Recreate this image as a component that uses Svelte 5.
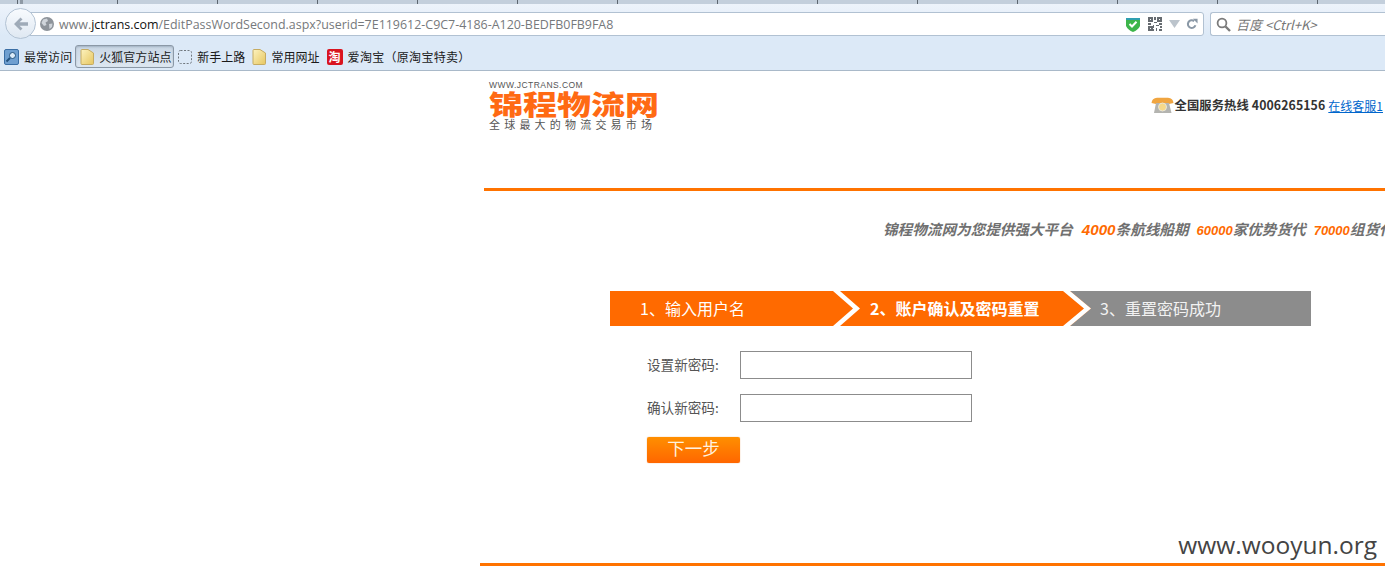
<script>
  const bookmarks = [
    { icon: 'search', label: '最常访问' },
    { icon: 'folder', label: '火狐官方站点', active: true },
    { icon: 'dashed', label: '新手上路' },
    { icon: 'folder', label: '常用网址' },
    { icon: 'tao', label: '爱淘宝（原淘宝特卖）' }
  ];
  const qrCells = [
    [0,0,3,3],[6,0,3,3],[0,6,3,3],[1,1,1,1],[7,1,1,1],[1,7,1,1],
    [4,0,1,2],[4,3,2,1],[0,4,2,1],[3,5,1,2],[5,5,2,1],[7,4,2,1],[8,6,1,1],[5,7,1,2],[7,8,2,1],[3,8,1,1]
  ];
</script>

<div class="browser">
  <div class="tabstrip"></div>
  <div class="toolbar">
    <div class="nav">
      <div class="urlbar">
        <svg class="globe" viewBox="0 0 14 14" width="14" height="14">
          <circle cx="7" cy="7" r="7" fill="#8d939a" />
          <path d="M3 2.5 L7 1.5 L8 4 L5.5 5.5 L6.5 8 L4 9 L1.5 6 Z M9 7 L12.5 6.5 L12 10 L9.5 12 Z" fill="#cfd4da" />
        </svg>
        <span class="url"><span class="dim">www.</span><span class="host">jctrans.com</span><span class="dim">/EditPassWordSecond.aspx?userid=7E119612-C9C7-4186-A120-BEDFB0FB9FA8</span></span>
        <svg class="shield" viewBox="0 0 14 15" width="14" height="15">
          <path d="M0 1 H14 V9 Q12 13 7 15 Q2 13 0 9 Z" fill="#3db54a" />
          <path d="M0 1 H14 V3 H0 Z" fill="#2f9fb0" />
          <path d="M3.5 7 L6 9.5 L10.5 4.8" fill="none" stroke="#fff" stroke-width="2" />
        </svg>
        <svg class="qr" viewBox="0 0 9 9" width="14" height="14" shape-rendering="crispEdges">
          {#each qrCells as c, i}
            <rect x={c[0]} y={c[1]} width={c[2]} height={c[3]} fill={i > 2 && i < 6 ? '#fff' : '#666b70'} />
          {/each}
        </svg>
        <svg class="tri" viewBox="0 0 11 8" width="11" height="8"><path d="M0 0 H11 L5.5 8 Z" fill="#bcc4cc" /></svg>
        <svg class="reload" viewBox="0 0 14 14" width="12" height="12">
          <path d="M11 8.5 A4.5 4.5 0 1 1 9.5 3.6" fill="none" stroke="#8a98a6" stroke-width="2.4" />
          <path d="M8 1 H13.5 V6.5 Z" fill="#8a98a6" />
        </svg>
      </div>
      <div class="searchbox">
        <svg viewBox="0 0 15 15" width="15" height="15">
          <circle cx="6" cy="6" r="4.4" fill="none" stroke="#7b7b7b" stroke-width="1.8" />
          <path d="M9.5 9.5 L14 14" stroke="#7b7b7b" stroke-width="2.4" />
        </svg>
        <span>百度 &lt;Ctrl+K&gt;</span>
      </div>
      <div class="back">
        <svg viewBox="0 0 16 14" width="16" height="14">
          <path d="M7.5 0.5 L1 7 L7.5 13.5 L9.5 11.5 L6.5 8.7 H15 V5.3 H6.5 L9.5 2.5 Z" fill="#9fabb8" />
        </svg>
      </div>
    </div>
    <div class="bookmarks">
      {#each bookmarks as b}
        <div class="bm" class:active={b.active}>
          {#if b.icon === 'search'}
            <svg viewBox="0 0 15 16" width="15" height="16">
              <rect x="0.5" y="0.5" width="14" height="15" rx="1.5" fill="#6f9fd0" stroke="#3a6ea5" />
              <circle cx="8.5" cy="6.5" r="3" fill="#dcebf8" stroke="#23527f" />
              <path d="M6 9 L2.5 12.5" stroke="#23527f" stroke-width="2" />
            </svg>
          {:else if b.icon === 'folder'}
            <svg viewBox="0 0 14 16" width="14" height="16">
              <defs>
                <linearGradient id="fold" x1="0" y1="0" x2="1" y2="1">
                  <stop offset="0" stop-color="#fdf3c0" />
                  <stop offset="1" stop-color="#e6c65f" />
                </linearGradient>
              </defs>
              <path d="M1 1.5 Q1 0.5 2 0.5 H8 L13.5 4 V14.5 Q13.5 15.5 12.5 15.5 H2 Q1 15.5 1 14.5 Z" fill="url(#fold)" stroke="#c5ab62" />
            </svg>
          {:else if b.icon === 'dashed'}
            <svg viewBox="0 0 14 14" width="14" height="14">
              <rect x="0.5" y="0.5" width="13" height="13" rx="2" fill="none" stroke="#71787f" stroke-dasharray="2 1.5" />
            </svg>
          {:else}
            <span class="tao">淘</span>
          {/if}
          <span class="bm-label">{b.label}</span>
        </div>
      {/each}
    </div>
  </div>

  <main class="page">
    <header class="head">
      <div class="logo">
        <div class="logo-url">WWW.JCTRANS.COM</div>
        <div class="logo-name">锦程物流网</div>
        <div class="logo-sub">全球最大的物流交易市场</div>
      </div>
      <div class="hotline">
        <svg viewBox="0 0 23 16" width="23" height="16">
          <path d="M0.5 6 Q1 1 6 0.8 H17 Q22 1 22.5 6 L18 7 L5 7 L0.5 6 Z" fill="#f0a540" />
          <path d="M3 16 L5 6 H18 L20.5 16 Z" fill="#b4b4b0" />
          <circle cx="11.5" cy="10" r="4" fill="#f6d98a" stroke="#e9e6d8" />
        </svg>
        <b>全国服务热线 4006265156</b>
        <a href="#kf">在线客服1</a>
      </div>
    </header>
    <div class="rule"></div>
    <div class="slogan">
      锦程物流网为您提供强大平台<em class="big">4000</em>条航线船期<em>60000</em>家优势货代<em>70000</em>组货代
    </div>

    <section class="reset">
      <div class="steps">
        <svg class="chev" viewBox="0 0 701 35" width="701" height="35">
          <polygon points="460,0 701,0 701,35 460,35 481,17.5" fill="#8c8c8c" />
          <polygon points="223,0 230,0 250,17.5 230,35 223,35 243,17.5" fill="#fff" />
          <polygon points="453,0 460,0 481,17.5 460,35 453,35 474,17.5" fill="#fff" />
        </svg>
        <div class="step one">1、输入用户名</div>
        <div class="step two">2、账户确认及密码重置</div>
        <div class="step three">3、重置密码成功</div>
      </div>

      <form class="form">
        <label class="row"><span>设置新密码:</span><input type="password" /></label>
        <label class="row"><span>确认新密码:</span><input type="password" /></label>
        <button type="button">下一步</button>
      </form>
    </section>

    <div class="foot"></div>
  </main>
  <div class="mark">www.wooyun.org</div>
</div>

<style>
  :global(body) {
    margin: 0;
    background: #fff;
    overflow: hidden;
  }
  .browser {
    position: relative;
    width: 1385px;
    height: 575px;
    overflow: hidden;
    font-family: "Noto Sans CJK SC", "Noto Sans", sans-serif;
  }
  .tabstrip {
    height: 4px;
    background-color: #c3cfdc;
    background-image: linear-gradient(90deg, #8e99a5, #8e99a5), linear-gradient(90deg, #5c6670 0 1px, transparent 1px);
    background-size: 3px 4px, 100px 4px;
    background-position: 20px 0, 17px 0;
    background-repeat: no-repeat, repeat-x;
  }
  .toolbar {
    height: 67px;
    box-sizing: border-box;
    border-bottom: 1px solid #a9b9c9;
    background: linear-gradient(#edf3fb, #dce9f7 32px);
  }
  .nav {
    position: relative;
    height: 38px;
    padding: 8px 0 0 20px;
    box-sizing: border-box;
    display: flex;
    gap: 6px;
  }
  .back {
    position: absolute;
    left: 5px;
    top: 4px;
    width: 31px;
    height: 31px;
    border-radius: 50%;
    box-sizing: border-box;
    border: 1px solid #b3c3d4;
    background: linear-gradient(#f8fbfe, #dfe8f2);
    display: flex;
    align-items: center;
    justify-content: center;
  }
  .urlbar {
    width: 1184px;
    height: 24px;
    box-sizing: border-box;
    background: #fff;
    border: 1px solid #b1c1d2;
    border-radius: 3px;
    display: flex;
    align-items: center;
    padding-left: 19px;
  }
  .globe { flex: none; }
  .url {
    margin-left: 5px;
    flex: 1;
    font: 12.44px "Open Sans", "Noto Sans", sans-serif;
    white-space: nowrap;
  }
  .dim { color: #76797c; }
  .host { color: #111; }
  .shield { margin-right: 8px; }
  .qr { margin-right: 7px; }
  .tri { margin-right: 6px; }
  .reload { margin-right: 5px; }
  .searchbox {
    flex: 1;
    height: 24px;
    box-sizing: border-box;
    background: #fff;
    border: 1px solid #b1c1d2;
    border-right: 0;
    border-radius: 3px 0 0 3px;
    display: flex;
    align-items: center;
    padding-left: 5px;
    gap: 5px;
    color: #777;
    font-size: 13px;
    font-style: italic;
  }
  .bookmarks {
    height: 27px;
    display: flex;
    align-items: center;
    padding: 2px 0 0 4px;
    box-sizing: border-box;
    font-size: 12px;
    color: #1a1a1a;
  }
  .bm {
    display: flex;
    align-items: center;
    gap: 5px;
    height: 23px;
    margin-right: 7px;
    white-space: nowrap;
  }
  .bm-label { letter-spacing: 0.05px; }
  .bm:last-child .bm-label { letter-spacing: 0.3px; }
  .bm.active {
    box-sizing: border-box;
    width: 99px;
    margin-left: -4px;
    margin-right: 4px;
    padding-left: 4px;
    border: 1px solid #8b98a6;
    border-radius: 3px;
    background: linear-gradient(#c9d6e4, #dde7f1);
    box-shadow: inset 0 1px 2px rgba(90, 110, 130, 0.35);
  }
  .tao {
    width: 16px;
    height: 16px;
    border-radius: 2px;
    background: #d9141f;
    color: #fff;
    font-size: 12px;
    font-weight: 700;
    line-height: 16px;
    text-align: center;
  }
  .page {
    margin-left: 480px;
    width: 905px;
    height: 504px;
    overflow: hidden;
    font-family: "Noto Sans CJK SC", "Liberation Sans", sans-serif;
  }
  .head {
    height: 117px;
    display: flex;
    justify-content: space-between;
    padding: 9px 2px 0 9px;
    box-sizing: border-box;
  }
  .logo-url {
    font: 8.5px/11px "Liberation Sans", sans-serif;
    letter-spacing: 0.45px;
    color: #555;
  }
  .logo-name {
    font: 900 27px/26px "Noto Sans CJK SC", sans-serif;
    color: #ff6a13;
    white-space: nowrap;
    width: 135px;
    transform: scaleX(1.26);
    transform-origin: left center;
  }
  .logo-sub {
    font-size: 11px;
    line-height: 14px;
    letter-spacing: 4.2px;
    color: #555;
    white-space: nowrap;
  }
  .hotline {
    display: flex;
    align-items: center;
    height: 18px;
    margin-top: 16px;
    font-size: 12px;
    color: #333;
    white-space: nowrap;
  }
  .hotline b {
    margin-left: 1px;
    font-size: 12.3px;
    letter-spacing: 0.1px;
  }
  .hotline a {
    margin-left: 3px;
    color: #0066cc;
    text-decoration: underline;
  }
  .rule {
    margin-left: 4px;
    height: 3px;
    background: #ff7300;
  }
  .slogan {
    margin-top: 28px;
    height: 20px;
    line-height: 20px;
    padding-left: 403px;
    font-size: 14.6px;
    font-weight: 700;
    font-style: italic;
    color: #707070;
    white-space: nowrap;
  }
  .slogan em {
    margin-left: 8px;
    font-size: 13px;
    color: #ff6a00;
    font-family: "Liberation Sans", sans-serif;
  }
  .slogan em.big {
    margin-left: 9px;
    font-size: 15.2px;
  }
  .reset {
    margin: 52px 0 0 130px;
  }
  .steps {
    position: relative;
    width: 701px;
    height: 35px;
    background: #ff6a00;
    display: flex;
    color: #fff;
    font-size: 16px;
    line-height: 35px;
    white-space: nowrap;
  }
  .chev {
    position: absolute;
    left: 0;
    top: 0;
  }
  .step { position: relative; }
  .one { width: 260px; padding-left: 30px; box-sizing: border-box; }
  .two { width: 230px; font-weight: 700; }
  .three { color: #f2f2f2; }
  .form {
    padding: 25px 0 0 37px;
    font-size: 13.6px;
    color: #555;
  }
  .row {
    display: flex;
    align-items: center;
    margin-bottom: 15px;
  }
  .row span {
    width: 93px;
    margin-bottom: 3px;
  }
  .row input {
    width: 232px;
    height: 28px;
    box-sizing: border-box;
    border: 1px solid #8c8c8c;
    background: #fff;
    margin: 0;
    padding: 0;
  }
  .form button {
    display: block;
    width: 93px;
    height: 26px;
    padding: 0 0 4px;
    border: 0;
    border-radius: 2px;
    background: linear-gradient(#ff8f00, #ff6600);
    box-shadow: 0 0 1px #d97a30;
    color: #fff2df;
    font: 17.5px/22px "Noto Sans CJK SC", sans-serif;
  }
  .foot {
    margin-top: 100px;
    height: 3px;
    background: #ff7300;
  }
  .mark {
    position: absolute;
    right: 8px;
    top: 529px;
    font: 24.5px/32px "Open Sans", "Noto Sans", sans-serif;
    color: #444;
  }
</style>
